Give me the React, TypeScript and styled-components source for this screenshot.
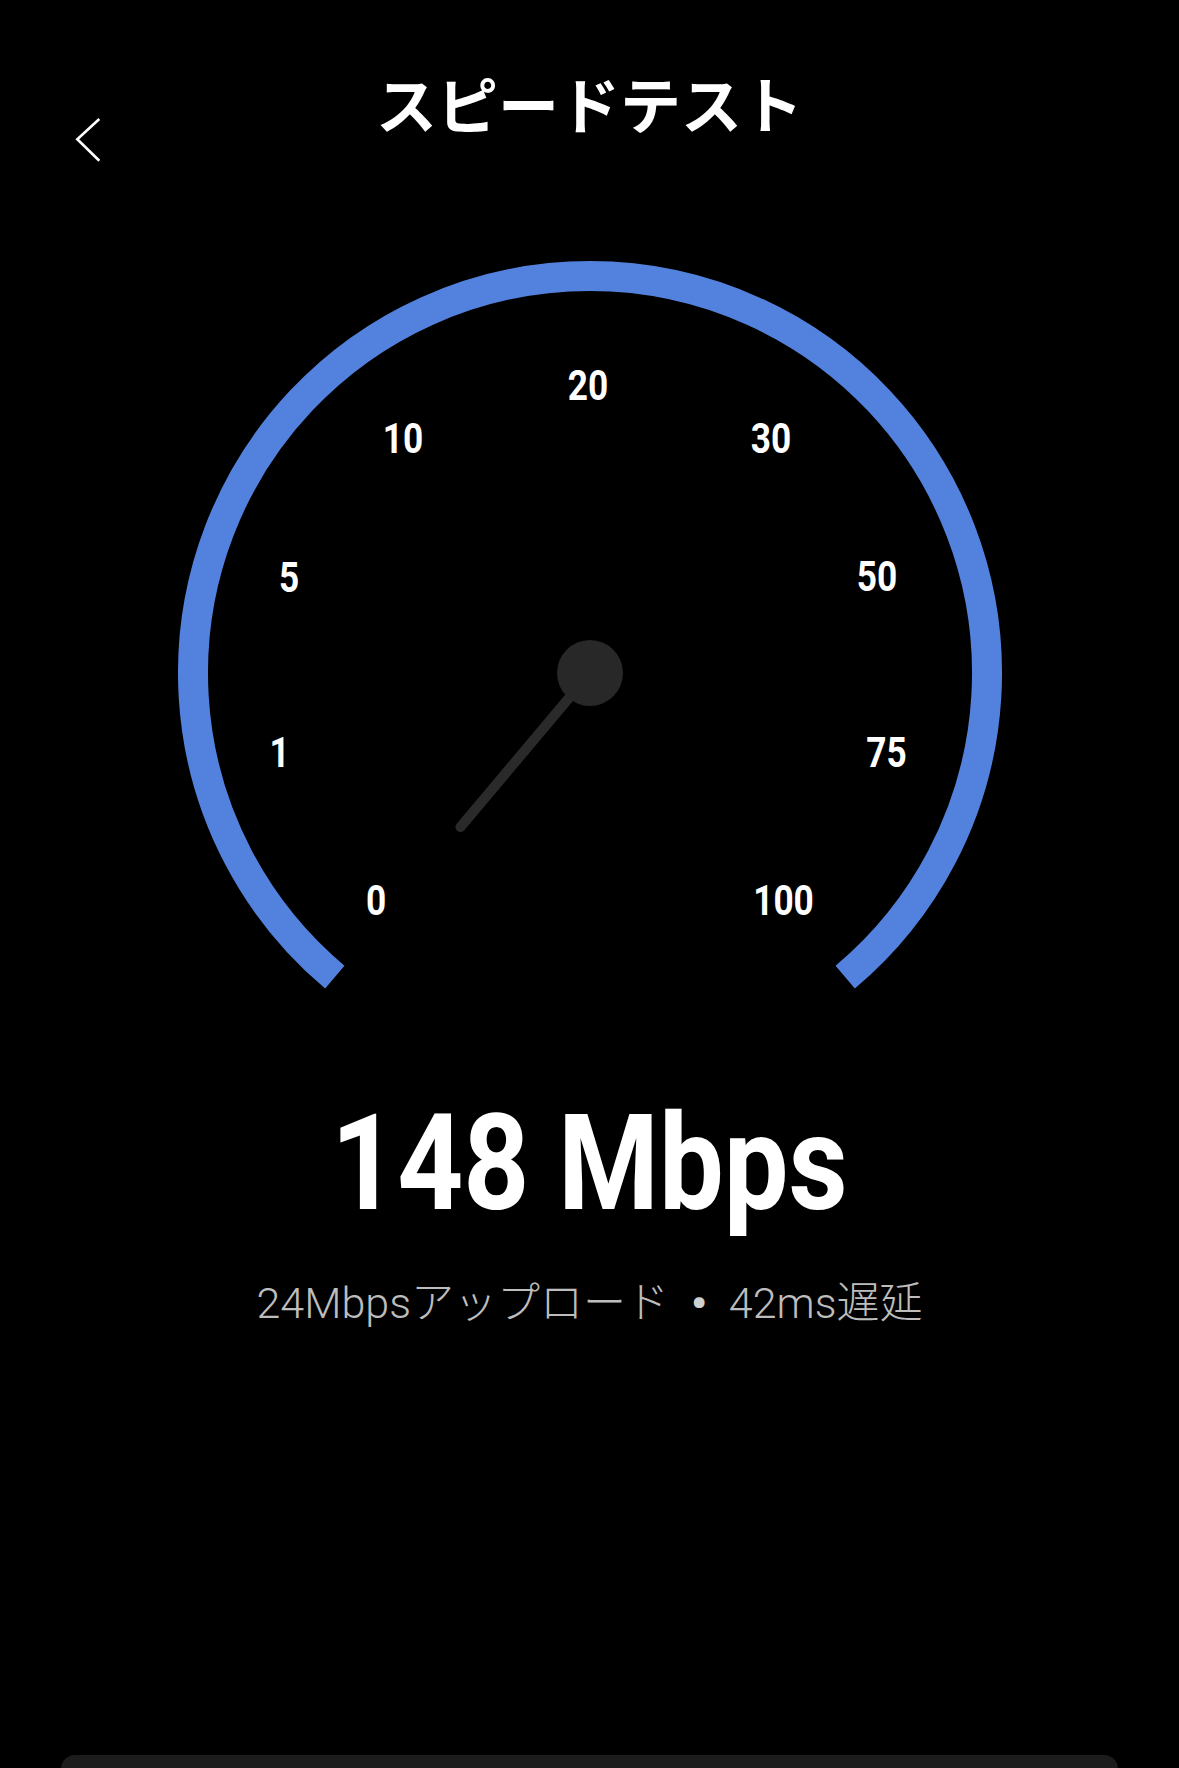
import React from "react";
import styled, { createGlobalStyle } from "styled-components";

const GlobalStyle = createGlobalStyle`
	html, body {
		margin: 0;
		padding: 0;
		background: #000;
		overflow: hidden;
	}
	* {
		box-sizing: border-box;
	}
`;

const Screen = styled.div`
	min-height: 100vh;
	background: #000;
	display: flex;
	flex-direction: column;
	font-family: Roboto, "Noto Sans CJK JP", sans-serif;
	color: #fff;
`;

const NavBar = styled.header`
	display: grid;
	grid-template-columns: 1fr auto 1fr;
	align-items: start;
	padding-top: 73px;
`;

const BackButton = styled.button`
	justify-self: start;
	margin: 43px 0 0 75px;
	padding: 0;
	border: none;
	background: none;
	display: flex;
	cursor: pointer;
`;

const Title = styled.h1`
	margin: 0;
	font-family: "Noto Sans CJK JP", sans-serif;
	font-size: 61px;
	line-height: 60px;
	font-weight: 700;
	color: #fff;
`;

const GaugeWrap = styled.div`
	display: flex;
	justify-content: center;
	margin-top: 89px;
`;

const GaugeSvg = styled.svg`
	display: block;
	width: 840px;
	height: 760px;
`;

const TickLabel = styled.text`
	font-family: Roboto, "DejaVu Sans", sans-serif;
	font-size: 42px;
	font-weight: 700;
	fill: #fff;
`;

const Speed = styled.div`
	margin-top: 84px;
	text-align: center;
	font-family: Roboto, "DejaVu Sans", sans-serif;
	font-size: 134px;
	line-height: 134px;
	font-weight: 700;
	color: #fff;
`;

const SpeedText = styled.span`
	display: inline-block;
	transform: scaleX(0.86);
	transform-origin: center;
`;

const Stats = styled.p`
	margin: 51px 0 0;
	text-align: center;
	font-family: Roboto, "Noto Sans CJK JP", sans-serif;
	font-size: 43px;
	line-height: 43px;
	font-weight: 300;
	color: #bdbdbd;
	white-space: nowrap;
`;

const Sep = styled.span`
	margin: 0 22px;
	font-weight: 900;
	color: #d0d0d0;
`;

const BottomSheet = styled.div`
	margin: 430px 61px 0;
	height: 60px;
	background: #1c1c1c;
	border-radius: 14px 14px 0 0;
`;

const CX = 420;
const CY = 420;
const R = 397;

const polar = (deg: number, r: number) => {
	const a = (deg * Math.PI) / 180;
	return [CX + r * Math.cos(a), CY + r * Math.sin(a)];
};

const ticks = [
	{ label: "0", x: 206, y: 647 },
	{ label: "1", x: 109.5, y: 499 },
	{ label: "5", x: 119, y: 324 },
	{ label: "10", x: 233, y: 185 },
	{ label: "20", x: 418, y: 132 },
	{ label: "30", x: 601, y: 185 },
	{ label: "50", x: 707, y: 323 },
	{ label: "75", x: 716.5, y: 499 },
	{ label: "100", x: 613.5, y: 647 },
];

const Gauge = () => {
	const [sx, sy] = polar(130, R);
	const [ex, ey] = polar(50, R);
	return (
		<GaugeSvg viewBox="0 0 840 760">
			<path
				d={`M ${sx} ${sy} A ${R} ${R} 0 1 1 ${ex} ${ey}`}
				fill="none"
				stroke="#5382de"
				strokeWidth={30}
			/>
			{ticks.map(t => (
				<TickLabel
					key={t.label}
					textAnchor="middle"
					transform={`translate(${t.x} ${t.y + 15}) scale(0.84 1)`}
				>
					{t.label}
				</TickLabel>
			))}
			{/* needle */}
			<line
				x1={CX}
				y1={CY}
				x2={290.5}
				y2={574}
				stroke="#2a2a2a"
				strokeWidth={10}
				strokeLinecap="round"
			/>
			<circle cx={CX} cy={CY} r={33} fill="#282828" />
		</GaugeSvg>
	);
};

const App = () => {
	return (
		<>
			<GlobalStyle />
			<Screen>
				<NavBar>
					<BackButton aria-label="戻る">
						<svg width="28" height="48" viewBox="0 0 28 48">
							<polyline
								points="24.3,3 2.3,23.3 24.3,44.7"
								fill="none"
								stroke="#fff"
								strokeWidth={2.6}
							/>
						</svg>
					</BackButton>
					<Title>スピードテスト</Title>
					<div />
				</NavBar>
				<GaugeWrap>
					<Gauge />
				</GaugeWrap>
				<Speed>
					<SpeedText>148 Mbps</SpeedText>
				</Speed>
				<Stats>
					24Mbpsアップロード<Sep>•</Sep>42ms遅延
				</Stats>
				<BottomSheet />
			</Screen>
		</>
	);
};

export default App;
